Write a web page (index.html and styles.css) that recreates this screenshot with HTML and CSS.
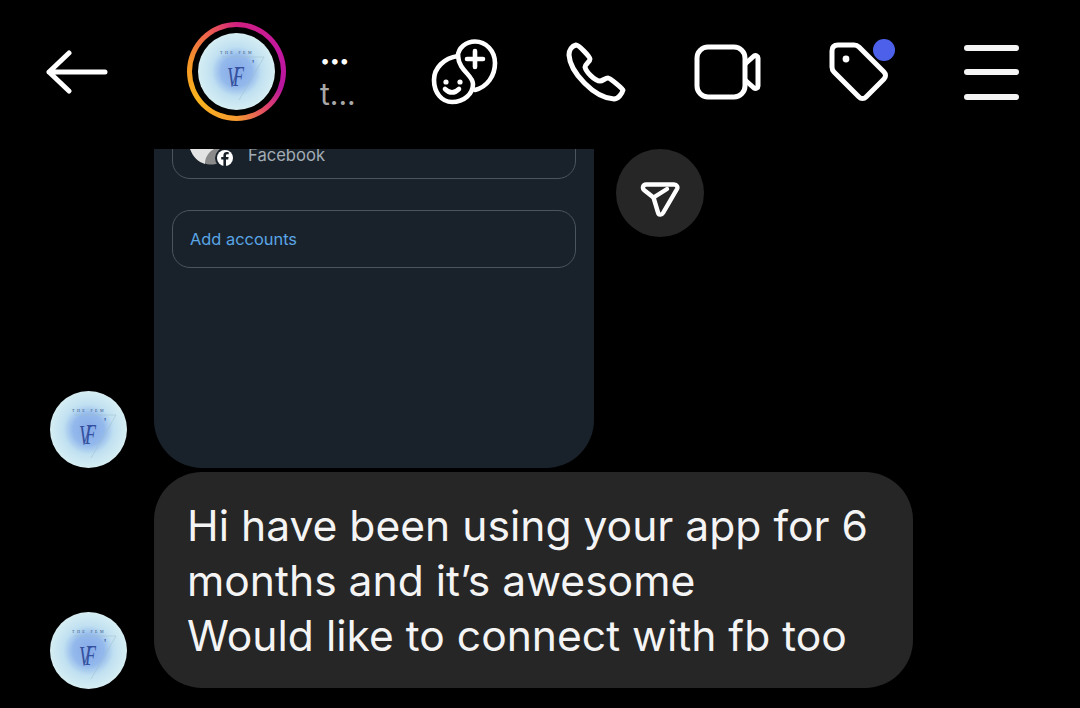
FILE: index.html
```html
<!DOCTYPE html>
<html lang="en">
<head>
  <meta charset="UTF-8">
  <meta name="viewport" content="width=device-width, initial-scale=1.0">
  <title>Chat</title>
  <link rel="stylesheet" href="styles.css">
</head>
<body>
  <svg class="defs" width="0" height="0">
    <defs>
      <radialGradient id="wash" cx="50%" cy="50%" r="50%">
        <stop offset="0%" stop-color="#86a9e8"/>
        <stop offset="40%" stop-color="#93b9ec"/>
        <stop offset="65%" stop-color="#c0e0f1"/>
        <stop offset="100%" stop-color="#d6eef3"/>
      </radialGradient>
      <symbol id="logo" viewBox="0 0 77 77">
        <circle cx="38.5" cy="38.5" r="38.5" fill="url(#wash)"/>
        <path d="M24 24 H66 L41 67" fill="none" stroke="#9dbccb" stroke-width=".5"/>
        <text class="logo-small" x="39" y="21" text-anchor="middle">THE FEM</text>
        <text class="logo-big" transform="translate(29 54) scale(.75 1.25)">V</text>
        <text class="logo-big" transform="translate(35 53) scale(.75 1.25)">F</text>
        <text class="logo-tick" x="54" y="35">'</text>
      </symbol>
    </defs>
  </svg>

  <header class="topbar">
    <svg class="back" width="62" height="44" viewBox="0 0 62 44">
      <path d="M23 3 L3 22 L23 41 M3 22 H59" fill="none" stroke="#fff" stroke-width="5" stroke-linecap="round" stroke-linejoin="round"/>
    </svg>

    <div class="ring">
      <div class="ring-inner">
        <svg class="avatar" viewBox="0 0 77 77"><use href="#logo"/></svg>
      </div>
    </div>

    <div class="name">
      <div class="name-dots">•••</div>
      <div class="name-sub">t...</div>
    </div>

    <svg class="icon-add" width="68" height="66" viewBox="0 0 68 66" fill="none" stroke="#fff" stroke-width="4.6" stroke-linecap="round" stroke-linejoin="round">
      <path d="M27 17 C13 19 3 29 3 41 C3 54 11 63 21 63 C33 63 42 55 42 45 C42 36 28 32 27 17 Z"/>
      <path d="M27 17 C27 9 35 2.5 44 2.5 C55 2.5 64 12 64 24 C64 37 56 48 44 51"/>
      <path d="M44 12 V28 M36 20 H52"/>
      <path d="M14 50 Q21 57 28 50"/>
      <circle cx="15" cy="43" r="2.6" fill="#fff" stroke="none"/>
      <circle cx="29" cy="43" r="2.6" fill="#fff" stroke="none"/>
    </svg>

    <svg class="icon-phone" width="60" height="60" viewBox="0 0 60 60">
      <path d="M10 3 C6 4 3 8 3 13 C4 30 28 56 48 57 C52 57 56 52 57 48 C57 47 44 36 42 36 C39 36 37 39 34 39 C29 39 20 30 19 25 C19 22 24 20 24 17 C24 15 13 3 10 3 Z" fill="none" stroke="#fff" stroke-width="5" stroke-linejoin="round"/>
    </svg>

    <svg class="icon-video" width="67" height="56" viewBox="0 0 67 56" fill="none" stroke="#fff" stroke-width="5" stroke-linejoin="round">
      <rect x="3" y="3" width="48" height="50" rx="11"/>
      <path d="M51 20 L60 12 C62 11 64 12 64 14 V42 C64 44 62 45 60 44 L51 36"/>
    </svg>

    <div class="tag-wrap">
      <svg class="icon-tag" width="60" height="60" viewBox="0 0 60 60" fill="none" stroke="#fff" stroke-width="5" stroke-linejoin="round">
        <path d="M9 3 H25 C27 3 29 4 30 5 L55 30 C57 32 57 35 55 37 L37 55 C35 57 32 57 30 55 L5 30 C4 29 3 27 3 25 V9 C3 5 5 3 9 3 Z"/>
        <circle cx="17" cy="17" r="3.4" fill="#fff" stroke="none"/>
      </svg>
      <span class="tag-dot"></span>
    </div>

    <div class="menu">
      <span></span>
      <span></span>
      <span></span>
    </div>
  </header>

  <main class="chat">
    <div class="row">
      <svg class="avatar" viewBox="0 0 77 77"><use href="#logo"/></svg>
      <div class="card">
        <div class="account-box account-fb">
          <svg class="fb-icons" width="44" height="32" viewBox="0 0 44 32">
            <path d="M14 24 C18 26 24 26 28 24 L30 8 H14 Z" fill="#8a8a8a"/>
            <path d="M0 10 C3 18 8 23 15 25 C15 20 17 14 24 10 Z" fill="#e3e3e3"/>
            <circle cx="35" cy="19" r="10" fill="#19222b"/>
            <circle cx="35" cy="19" r="8" fill="#fff"/>
            <path d="M36 27 V20.5 H38.2 L38.6 18 H36 V16.6 C36 15.8 36.4 15.3 37.4 15.3 H38.7 V13.2 C38.2 13.1 37.5 13 36.8 13 C34.7 13 33.4 14.2 33.4 16.3 V18 H31.2 V20.5 H33.4 V27 Z" fill="#19222b"/>
          </svg>
          <span class="account-label">Facebook</span>
        </div>
        <div class="account-box account-add">Add accounts</div>
      </div>
      <div class="forward">
        <svg width="40" height="38" viewBox="0 0 40 38" fill="none" stroke="#fff" stroke-width="4.4" stroke-linecap="round" stroke-linejoin="round">
          <path d="M6 4.5 H34 C37 4.5 38 7 37 9 L23 33 C21.5 35.5 18.5 35 18 32.5 L13.5 17.5 L4 10 C2 8 3 4.5 6 4.5 Z"/>
          <path d="M13.5 17.5 L27 9"/>
        </svg>
      </div>
    </div>

    <div class="row row-msg">
      <svg class="avatar" viewBox="0 0 77 77"><use href="#logo"/></svg>
      <div class="bubble">Hi have been using your app for 6<br>months and it’s awesome<br>Would like to connect with fb too</div>
    </div>
  </main>
</body>
</html>
```

FILE: styles.css
```css
body {
  margin: 0;
  width: 1080px;
  height: 708px;
  overflow: hidden;
  background-color: #000;
  font-family: Inter, "Liberation Sans", sans-serif;
  color: #fff;
}
.defs {
  display: block;
  height: 0;
}
.avatar {
  display: block;
  width: 77px;
  height: 77px;
  flex: none;
}
.logo-small {
  font-family: "Liberation Serif", serif;
  font-size: 4px;
  letter-spacing: 2.4px;
  fill: #35507f;
}
.logo-big {
  font-family: "Liberation Serif", serif;
  font-style: italic;
  font-size: 24px;
  fill: #34509e;
}
.logo-tick {
  font-family: "Liberation Serif", serif;
  font-size: 12px;
  fill: #34509e;
}

.topbar {
  display: flex;
  align-items: center;
  height: 149px;
  padding-bottom: 6px;
  box-sizing: border-box;
}
.back {
  margin-left: 46px;
  flex: none;
}
.ring {
  width: 99px;
  height: 99px;
  margin-left: 79px;
  padding: 5px;
  box-sizing: border-box;
  border-radius: 50%;
  background: conic-gradient(#d1207f 0deg, #c4189f 60deg, #b8169f 110deg, #e0446a 140deg, #f59a30 180deg, #fab41e 235deg, #f59626 280deg, #ee5f50 325deg, #d1207f 360deg);
  flex: none;
}
.ring-inner {
  display: flex;
  align-items: center;
  justify-content: center;
  width: 100%;
  height: 100%;
  border-radius: 50%;
  background-color: #000;
}
.name {
  width: 46px;
  margin-left: 34px;
  margin-top: 16px;
  flex: none;
}
.name-dots {
  font-size: 18px;
  line-height: 28px;
  letter-spacing: -0.5px;
}
.name-sub {
  font-size: 30px;
  line-height: 38px;
  color: #a8a8a8;
}
.icon-add {
  margin-left: 65px;
  flex: none;
}
.icon-phone {
  margin-left: 67px;
  flex: none;
}
.icon-video {
  margin-left: 68px;
  flex: none;
}
.tag-wrap {
  position: relative;
  width: 60px;
  height: 60px;
  margin-left: 68px;
  flex: none;
}
.icon-tag {
  display: block;
}
.tag-dot {
  position: absolute;
  left: 44px;
  top: -3px;
  width: 22px;
  height: 22px;
  border-radius: 50%;
  background-color: #4d60ea;
}
.menu {
  display: flex;
  flex-direction: column;
  gap: 18.5px;
  width: 55px;
  margin-top: 1px;
  margin-left: 75px;
  flex: none;
}
.menu span {
  display: block;
  height: 6px;
  border-radius: 3px;
  background-color: #f4f4f4;
}

.chat {
  height: 559px;
  overflow: hidden;
}
.row {
  display: flex;
  align-items: flex-end;
  gap: 27px;
  padding-left: 50px;
}
.card {
  width: 440px;
  height: 319px;
  padding: 0 18px;
  box-sizing: border-box;
  border-radius: 0 0 48px 48px;
  background-color: #19222b;
  overflow: hidden;
  flex: none;
}
.account-box {
  display: flex;
  align-items: center;
  border: 1px solid #4b555e;
  border-radius: 18px;
  padding-left: 17px;
  font-size: 16.4px;
}
.account-fb {
  height: 50px;
  margin-top: -20px;
  padding-top: 2px;
  box-sizing: border-box;
}
.account-label {
  margin-left: 14px;
  font-size: 16.6px;
  color: #a3acb4;
}
.fb-icons {
  flex: none;
}
.account-add {
  height: 58px;
  margin-top: 31px;
  box-sizing: border-box;
  color: #5aa6e6;
}
.forward {
  display: flex;
  align-items: center;
  justify-content: center;
  align-self: flex-start;
  width: 88px;
  height: 88px;
  padding-top: 12px;
  margin-left: -5px;
  box-sizing: border-box;
  border-radius: 50%;
  background-color: #262626;
}
.row-msg {
  margin-top: 4px;
}
.row-msg .avatar {
  margin-bottom: -1px;
}
.bubble {
  width: 759px;
  height: 216px;
  padding: 26px 33px;
  box-sizing: border-box;
  border-radius: 48px;
  background-color: #262626;
  font-size: 42.6px;
  line-height: 55px;
  color: #f4f4f4;
}
```
